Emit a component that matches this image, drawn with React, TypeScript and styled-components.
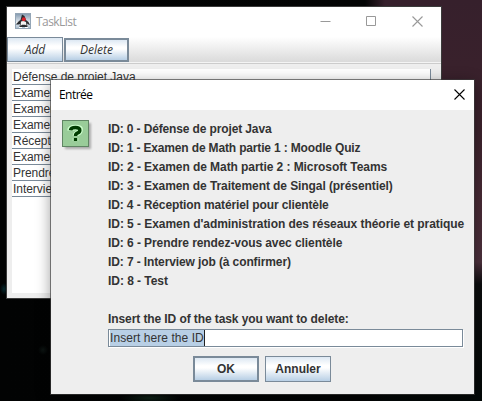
import React from 'react';
import styled, { createGlobalStyle } from 'styled-components';

const Global = createGlobalStyle`
  * { box-sizing: border-box; }
  html, body { margin: 0; padding: 0; overflow: hidden; }
  body { font-family: "Liberation Sans", Arial, sans-serif; font-size: 12px; color: #333; }
`;

const Desktop = styled.div`
  position: relative;
  width: 482px;
  height: 401px;
  overflow: hidden;
  background:
    radial-gradient(ellipse 30px 5px at 150px 398px, #10251a, transparent),
    radial-gradient(ellipse 4px 6px at 4px 289px, #06282d, transparent),
    radial-gradient(ellipse 5px 5px at 43px 350px, #0c1412, transparent),
    linear-gradient(90deg, #020303 0, #030404 365px, transparent 385px),
    linear-gradient(180deg, #36202c 0, #3c222c 130px, #482a35 200px, #4c303c 262px, #0c0d0e 284px, #030807 401px);
`;

const Frame = styled.section<{ $x: number; $y: number; $w: number; $h: number; $active?: boolean }>`
  position: absolute;
  left: ${p => p.$x}px;
  top: ${p => p.$y}px;
  width: ${p => p.$w}px;
  height: ${p => p.$h}px;
  display: flex;
  flex-direction: column;
  background: #eee;
  box-shadow: ${p => (p.$active ? '0 0 0 1px rgba(60,60,60,.65), 0 3px 14px rgba(0,0,0,.42)' : '0 0 0 1px #3b3b3b')};
`;

const TitleBar = styled.header<{ $active?: boolean }>`
  height: 30px;
  flex: none;
  display: flex;
  align-items: center;
  padding-left: 8px;
  background: #fff;
  color: ${p => (p.$active ? '#000' : '#999')};
  svg { display: block; flex: none; margin-bottom: 2px; }
`;

const Title = styled.h1`
  flex: 1;
  margin: 0;
  font: 400 12px/16px "Open Sans", "Noto Sans", sans-serif;
  letter-spacing: -0.55px;
`;

const AppIcon = styled.svg`
  margin-right: 5px;
`;

const WindowControls = styled.div`
  display: flex;
  gap: 35px;
  margin-right: 18px;
`;

const CloseSlot = styled.div`
  margin-right: 9px;
`;

const Toolbar = styled.div`
  display: flex;
  gap: 1px;
  height: 27px;
  flex: none;
  background: linear-gradient(#fff, #dadada 25px, #f4f4f4 25px, #f4f4f4 26px, #ccc 26px);
`;

const Button = styled.button<{ $w: number; $h: number; $thick?: boolean; $italic?: boolean; $drop?: number }>`
  width: ${p => p.$w}px;
  height: ${p => p.$h}px;
  margin: ${p => p.$drop ?? 0}px 0 0;
  padding: 0;
  border: ${p => (p.$thick ? 2 : 1)}px solid #7a8a99;
  border-radius: 0;
  background: linear-gradient(#dde8f3, #fff 35%, #fff 45%, #b8cfe5);
  color: #333;
  font: ${p => (p.$italic ? 'italic 400 12px/16px "Open Sans", sans-serif' : 'bold 12px/16px "Liberation Sans", sans-serif')};
`;

const ListPane = styled.div`
  margin: 5px 10px 5px 5px;
  flex: 1;
  background: #fff;
  overflow: hidden;
`;

const TaskRow = styled.div`
  height: 16px;
  padding-left: 1px;
  border: solid #7a8a99;
  border-width: 0 1px 1px 0;
  line-height: 17px;
  letter-spacing: -0.04px;
  white-space: nowrap;
`;

const DialogBody = styled.div`
  display: grid;
  grid-template-columns: 46px 355px;
  padding: 10px 0 0 11px;
`;

const Message = styled.div`
  min-width: 0;
`;

const MessageLine = styled.div<{ $track?: number }>`
  height: 19px;
  font-weight: bold;
  line-height: 19px;
  white-space: pre;
  letter-spacing: ${p => p.$track ?? 0}px;
`;

const Field = styled.div`
  height: 18px;
  display: flex;
  align-items: center;
  padding-left: 1px;
  background: #fff;
  border: 1px solid #7a8a99;
  box-shadow: 1px 1px 0 #fff;
`;

const Selection = styled.span`
  height: 16px;
  border-right: 1px solid #222;
  background: #b8cfe5;
  line-height: 17px;
  letter-spacing: 0.06px;
  white-space: nowrap;
`;

const Actions = styled.footer`
  display: flex;
  gap: 6px;
  padding: 9px 0 0 142px;
`;

const Cross = () => (
  <svg width="11" height="11" viewBox="0 0 11 11" fill="none" stroke="currentColor" strokeWidth="1.1">
    <path d="M.5.5l10 10M10.5.5l-10 10" />
  </svg>
);

const JavaIcon = () => (
  <AppIcon width="16" height="16" viewBox="0 0 16 16">
    <defs>
      <linearGradient id="tile" x1="0" y1="0" x2="0" y2="1">
        <stop stopColor="#8298ae" />
        <stop offset=".6" stopColor="#e4ebf2" />
        <stop offset="1" stopColor="#a9bccd" />
      </linearGradient>
    </defs>
    <rect x=".5" y=".5" width="15" height="15" fill="url(#tile)" stroke="#93a5b6" />
    <path d="M7 1.500 9.500 3 11 7l2.500 2 1.500 3-1.500-.5L12 10.500l.5 3.500h-8L5 11l-1.500.5H1L2.500 9 5.500 7z" fill="#2a2d30" />
    <path d="M6 8.500l2.500-.5 2.500 1 .5 3.500-1.500-.7H7L5.500 13z" fill="#f5f5f5" />
    <path d="M1 10.500l2-2M4 14.500h3M10 14.500h3" stroke="#fff" strokeWidth="1" />
    <circle cx="8.800" cy="6.200" r="2" fill="#d8202a" />
  </AppIcon>
);

const QuestionIcon = () => (
  <svg width="32" height="32" viewBox="0 0 32 32">
    <defs>
      <filter id="soft"><feGaussianBlur stdDeviation="1.2" /></filter>
    </defs>
    <rect x="3" y="3" width="26" height="26" fill="#aaa" filter="url(#soft)" />
    <rect x=".5" y=".5" width="26" height="26" fill="#9c9" stroke="#5f8563" />
    <path
      d="M8 10.500Q8 7.500 13.500 7.500t4.500 2.800q0 2-2.500 3-2 .8-2 2.700M13.500 18v3"
      fill="none" stroke="#ccffcc" strokeWidth="5.500"
    />
    <path
      d="M8.500 10.200Q9 7.500 13.500 7.500t4.300 2.700q0 2-2.500 3-1.800.8-1.800 2.800M13.500 18v3"
      fill="none" stroke="#003c00" strokeWidth="3.500"
    />
  </svg>
);

const tasks = [
  { name: 'Défense de projet Java', track: -0.13 },
  { name: 'Examen de Math partie 1 : Moodle Quiz', track: -0.155 },
  { name: 'Examen de Math partie 2 : Microsoft Teams', track: -0.07 },
  { name: 'Examen de Traitement de Singal (présentiel)', track: -0.08 },
  { name: 'Réception matériel pour clientèle', track: -0.115 },
  { name: "Examen d'administration des réseaux théorie et pratique", track: -0.055 },
  { name: 'Prendre rendez-vous avec clientèle', track: -0.075 },
  { name: 'Interview job (à confirmer)', track: -0.11 },
];

export default function App() {
  return (
    <>
      <Global />
      <Desktop>
        <Frame $x={7} $y={7} $w={434} $h={291}>
          <TitleBar>
            <JavaIcon />
            <Title>TaskList</Title>
            <WindowControls>
              <svg width="11" height="11" viewBox="0 0 11 11" stroke="currentColor"><path d="M.5 5.500h10" /></svg>
              <svg width="11" height="11" viewBox="0 0 11 11" stroke="currentColor" fill="none"><path d="M.5.5h9v9h-9z" /></svg>
              <Cross />
            </WindowControls>
          </TitleBar>
          <Toolbar>
            <Button $w={56} $h={25} $italic>Add</Button>
            <Button $w={65} $h={24} $drop={1} $italic $thick>Delete</Button>
          </Toolbar>
          <ListPane>
            {tasks.map(t => <TaskRow key={t.name}>{t.name}</TaskRow>)}
          </ListPane>
        </Frame>
        <Frame $x={51} $y={80} $w={423} $h={314} $active>
          <TitleBar $active>
            <Title>Entrée</Title>
            <CloseSlot><Cross /></CloseSlot>
          </TitleBar>
          <DialogBody>
            <QuestionIcon />
            <Message>
              {[...tasks, { name: 'Test', track: -0.05 }].map((t, i) => (
                <MessageLine key={t.name} $track={t.track}>{`ID: ${i} - ${t.name}`}</MessageLine>
              ))}
              <MessageLine />
              <MessageLine $track={-0.09}>Insert the ID of the task you want to delete:</MessageLine>
              <Field><Selection>Insert here the ID</Selection></Field>
            </Message>
          </DialogBody>
          <Actions>
            <Button $w={66} $h={26} $thick>OK</Button>
            <Button $w={66} $h={26}>Annuler</Button>
          </Actions>
        </Frame>
      </Desktop>
    </>
  );
}
